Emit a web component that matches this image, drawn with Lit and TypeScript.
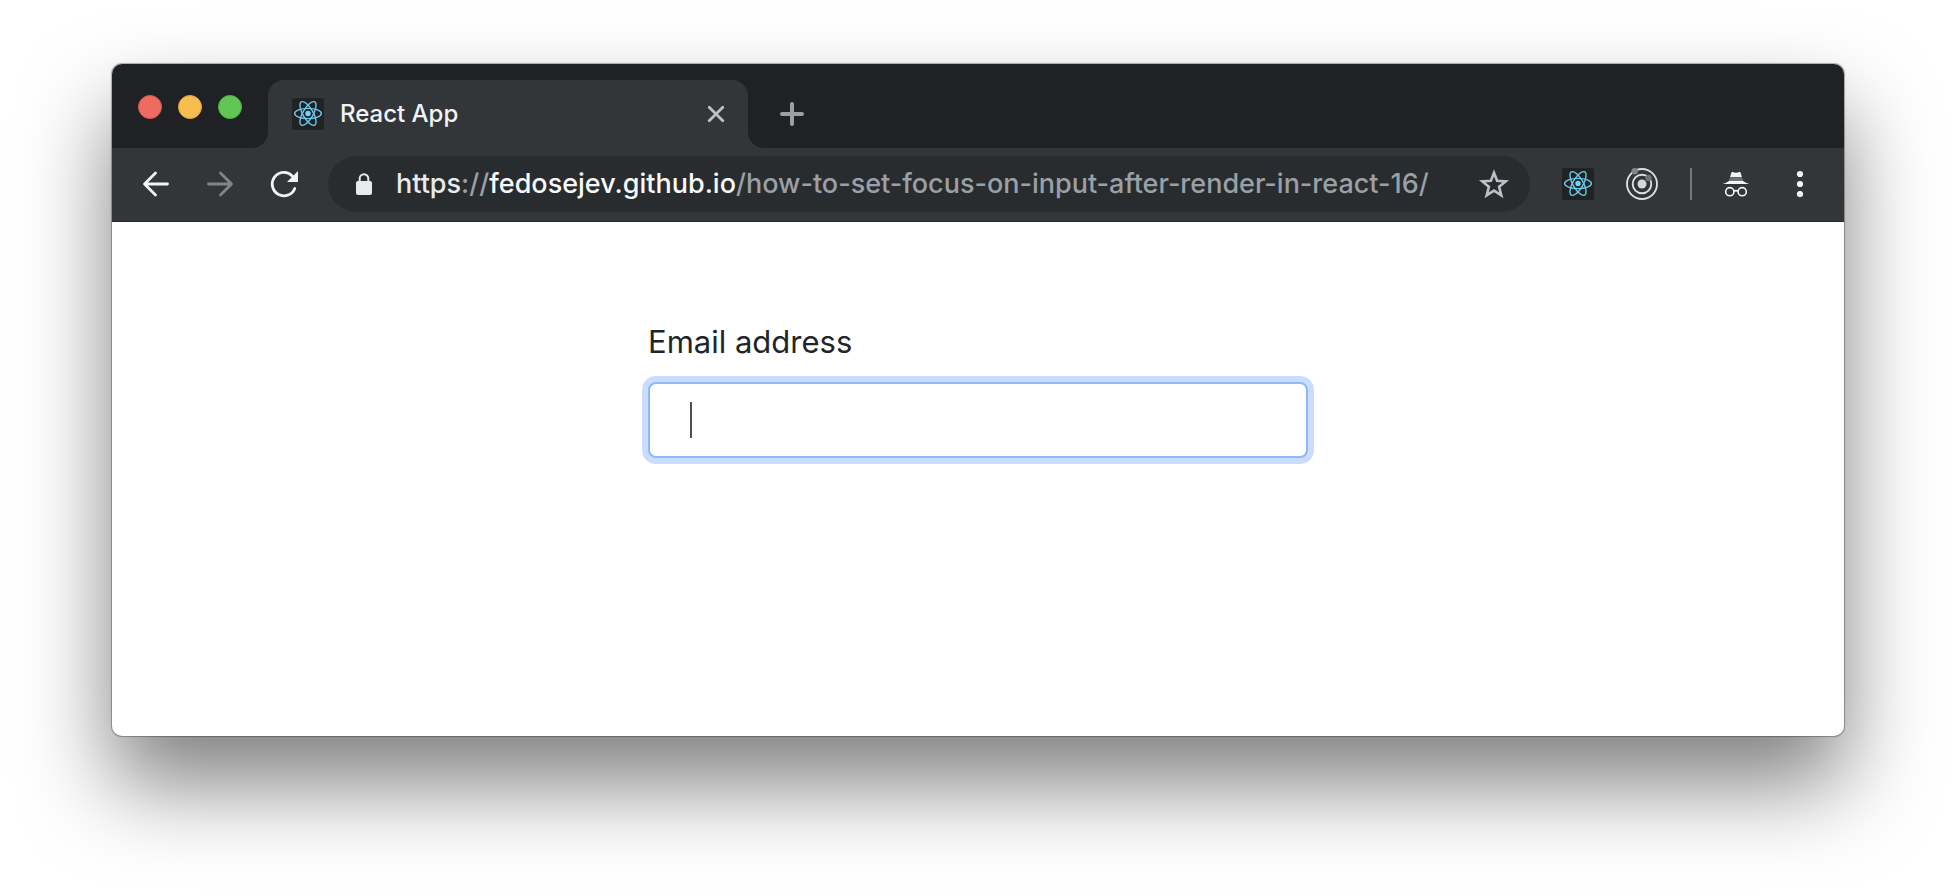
import { LitElement, html, css, svg } from "lit";
import { customElement, query } from "lit/decorators.js";

const reactMark = html`
  <svg class="icon" viewBox="0 0 32 32" aria-hidden="true">
    <rect width="32" height="32" rx="2.5" fill="#222222" />
    <circle cx="16" cy="15.5" r="2.7" fill="#74d3f8" />
    <g fill="none" stroke="#6bc8ee" stroke-width="1.4">
      ${[0, 60, 120].map(
        (a) => svg`<ellipse cx="16" cy="15.5" rx="13.4" ry="5.1" transform=${`rotate(${a} 16 15.5)`} />`
      )}
    </g>
  </svg>
`;

@customElement("browser-tabs")
class BrowserTabs extends LitElement {
  static styles = css`
    :host {
      display: flex;
      align-items: stretch;
      height: 84px;
      box-sizing: border-box;
      padding: 16px 28px 0 26px;
      background: #202124;
    }
    .lights {
      display: flex;
      gap: 16px;
      align-items: center;
      padding-bottom: 14px;
      margin-right: 26px;
    }
    .light {
      width: 24px;
      height: 24px;
      padding: 0;
      border: 1px solid;
      border-radius: 50%;
    }
    .close-window { background: #ed6b60; border-color: #d95a50; }
    .minimise { background: #f6be50; border-color: #dea73f; }
    .zoom { background: #62c655; border-color: #50b145; }
    .tab {
      position: relative;
      display: flex;
      align-items: center;
      width: 480px;
      box-sizing: border-box;
      padding: 0 20px 0 24px;
      border-radius: 16px 16px 0 0;
      background: #323639;
      color: #f1f3f4;
    }
    .tab::before,
    .tab::after {
      content: "";
      position: absolute;
      bottom: 0;
      width: 16px;
      height: 16px;
    }
    .tab::before {
      right: 100%;
      background: radial-gradient(circle at 0 0, transparent 15.5px, #323639 16.5px);
    }
    .tab::after {
      left: 100%;
      background: radial-gradient(circle at 100% 0, transparent 15.5px, #323639 16.5px);
    }
    .icon { width: 32px; height: 32px; display: block; }
    .small { width: 24px; height: 24px; display: block; }
    .title {
      flex: 1;
      margin-left: 16px;
      font: 500 24px/32px Inter, sans-serif;
    }
    .plain {
      padding: 0;
      border: 0;
      background: none;
      display: block;
    }
    .add { margin-left: 28px; }
  `;

  render() {
    return html`
      <div class="lights">
        <button class="light close-window" aria-label="Close window"></button>
        <button class="light minimise" aria-label="Minimise"></button>
        <button class="light zoom" aria-label="Zoom"></button>
      </div>
      <div class="tab">
        ${reactMark}
        <span class="title">React App</span>
        <button class="plain" aria-label="Close tab">
          <svg class="small" viewBox="0 0 24 24">
            <path d="M5.200 5.200l13.600 13.600M18.800 5.200L5.200 18.800" stroke="#bdc1c6" stroke-width="2.800" stroke-linecap="round" />
          </svg>
        </button>
      </div>
      <button class="plain add" aria-label="New tab">
        <svg class="icon" viewBox="0 0 32 32">
          <path d="M16 6v20M6 16h20" stroke="#9aa0a3" stroke-width="4" stroke-linecap="round" />
        </svg>
      </button>
    `;
  }
}

@customElement("browser-toolbar")
class BrowserToolbar extends LitElement {
  static styles = css`
    :host {
      display: flex;
      align-items: center;
      gap: 28px;
      padding: 8px 28px 9px;
      border-bottom: 1px solid #25282a;
      background: #323639;
    }
    .group { display: flex; align-items: center; gap: 32px; }
    .plain { padding: 0; border: 0; background: none; display: block; }
    .icon { display: block; width: 32px; height: 32px; }
    .omnibox {
      flex: 1;
      min-width: 0;
      display: flex;
      align-items: center;
      height: 56px;
      box-sizing: border-box;
      padding: 0 20px;
      margin-right: 4px;
      border-radius: 28px;
      background: #282c2f;
    }
    .address {
      flex: 1;
      min-width: 0;
      overflow: hidden;
      margin-left: 16px;
      white-space: nowrap;
      font: 500 27px/36px Inter, sans-serif;
      color: #9aa0a6;
    }
    .scheme { color: #e8eaed; }
    .host { color: #f8f9fa; }
    .divider { width: 2px; height: 32px; background: #77797b; }
  `;

  render() {
    return html`
      <nav class="group" aria-label="History">
        <button class="plain" aria-label="Back">
          <svg class="icon" viewBox="0 0 32 32" fill="none" stroke="#f1f3f4" stroke-width="2.8" stroke-linecap="round" stroke-linejoin="round">
            <path d="M27.5 16H5M15.5 5L4.5 16l11 11" />
          </svg>
        </button>
        <button class="plain" aria-label="Forward">
          <svg class="icon" viewBox="0 0 32 32" fill="none" stroke="#828587" stroke-width="2.8" stroke-linecap="round" stroke-linejoin="round">
            <path d="M4.500 16H27M16.500 5l11 11-11 11" />
          </svg>
        </button>
        <button class="plain" aria-label="Reload">
          <svg class="icon" viewBox="0 0 32 32">
            <path d="M26.800 20.500A11.700 11.700 0 1 1 24.300 7.900" fill="none" stroke="#f1f3f4" stroke-width="2.800" stroke-linecap="round" />
            <path d="M30 3v11H19z" fill="#f1f3f4" />
          </svg>
        </button>
      </nav>
      <div class="omnibox">
        <svg class="icon" viewBox="0 0 32 32" aria-hidden="true">
          <rect x="8" y="13" width="16" height="14" rx="2" fill="#e8eaed" />
          <path d="M11.700 14v-3.500a4.300 4.300 0 0 1 8.600 0V14" fill="none" stroke="#e8eaed" stroke-width="2" />
        </svg>
        <div class="address" role="textbox" tabindex="0" aria-label="Address"><span class="scheme">https</span>://<span class="host">fedosejev.github.io</span>/how-to-set-focus-on-input-after-render-in-react-16/</div>
        <button class="plain" aria-label="Bookmark this page">
          <svg class="icon" viewBox="0 0 32 32">
            <path d="M16 4.800l3.100 8 8.600.6-6.600 5.400 2.200 8.500L16 22.600l-7.300 4.700 2.200-8.500-6.600-5.400 8.600-.6z" fill="none" stroke="#bdc1c6" stroke-width="2.600" />
          </svg>
        </button>
      </div>
      <div class="group">
        <button class="plain" aria-label="React Developer Tools">${reactMark}</button>
        <button class="plain" aria-label="Orbit extension">
          <svg class="icon" viewBox="0 0 32 32">
            <circle cx="16" cy="16" r="15" fill="none" stroke="#dcdddd" stroke-width="1.900" />
            <circle cx="16" cy="16" r="9.300" fill="none" stroke="#dcdddd" stroke-width="1.900" />
            <circle cx="16" cy="16" r="4.500" fill="#d6d6d6" />
            <circle cx="8.700" cy="3.200" r="3.200" fill="#848688" />
            <circle cx="22.500" cy="10" r="3.200" fill="#707375" />
          </svg>
        </button>
        <span class="divider"></span>
      </div>
      <div class="group">
        <button class="plain" aria-label="Incognito">
          <svg class="icon" viewBox="0 0 32 32" fill="#f1f3f4">
            <path d="M10 9.200l1.400-4.600q.3-.8 1.200-.5 3.400 1.100 6.800 0 .9-.3 1.200.5L22 9.200z" />
            <path d="M9.500 10h13l.5 2.600H9z" fill="#6d7072" />
            <path d="M2.500 16q5.500-1.600 6.500-3.200h14q1 1.600 6.500 3.200z" />
            <g fill="none" stroke="#f1f3f4" stroke-width="1.600">
              <circle cx="9.800" cy="23.700" r="4.100" />
              <circle cx="22.200" cy="23.700" r="4.100" />
              <path d="M13.900 23.200q2.100-1.200 4.200 0" />
            </g>
          </svg>
        </button>
        <button class="plain" aria-label="Menu">
          <svg class="icon" viewBox="0 0 32 32" fill="#f1f3f4">
            <circle cx="16" cy="6" r="3.100" />
            <circle cx="16" cy="16" r="3.100" />
            <circle cx="16" cy="26" r="3.100" />
          </svg>
        </button>
      </div>
    `;
  }
}

@customElement("email-form")
class EmailForm extends LitElement {
  static styles = css`
    :host { display: block; width: 100%; max-width: 660px; }
    .label {
      display: block;
      margin-bottom: 16px;
      font: 400 31px/48px Inter, sans-serif;
      color: #212529;
    }
    .field { position: relative; }
    .input {
      display: block;
      width: 100%;
      height: 76px;
      box-sizing: border-box;
      padding: 12px 40px;
      border: 2px solid #8bbafb;
      border-radius: 8px;
      outline: 0;
      box-shadow: 0 0 0 6px #cbddfe;
      background: #fff;
      font: 400 31px/48px Inter, sans-serif;
      color: #495057;
      caret-color: transparent;
    }
    .caret {
      position: absolute;
      left: 42px;
      top: 20px;
      width: 2px;
      height: 36px;
      background: #495057;
      pointer-events: none;
    }
  `;

  @query(".input") input!: HTMLInputElement;

  firstUpdated() {
    this.input.focus();
  }

  render() {
    return html`
      <form>
        <label class="label" for="email">Email address</label>
        <div class="field">
          <input class="input" id="email" type="email" />
          <span class="caret"></span>
        </div>
      </form>
    `;
  }
}

@customElement("app-root")
class AppRoot extends LitElement {
  static styles = css`
    :host {
      display: flex;
      min-height: 100vh;
      box-sizing: border-box;
      padding: 64px 112px 160px;
      background: #fff;
      overflow: hidden;
    }
    .window {
      flex: 1;
      min-width: 0;
      display: flex;
      flex-direction: column;
      border-radius: 10px;
      background: #fff;
      box-shadow: 0 0 1px 1px rgba(0, 0, 0, 0.3), 0 48px 88px rgba(0, 0, 0, 0.5);
    }
    .chrome {
      border-radius: 10px 10px 0 0;
      overflow: hidden;
    }
    .page {
      display: flex;
      justify-content: center;
      padding: 96px 32px;
    }
  `;

  render() {
    return html`
      <div class="window">
        <header class="chrome">
          <browser-tabs></browser-tabs>
          <browser-toolbar></browser-toolbar>
        </header>
        <main class="page"><email-form></email-form></main>
      </div>
    `;
  }
}
